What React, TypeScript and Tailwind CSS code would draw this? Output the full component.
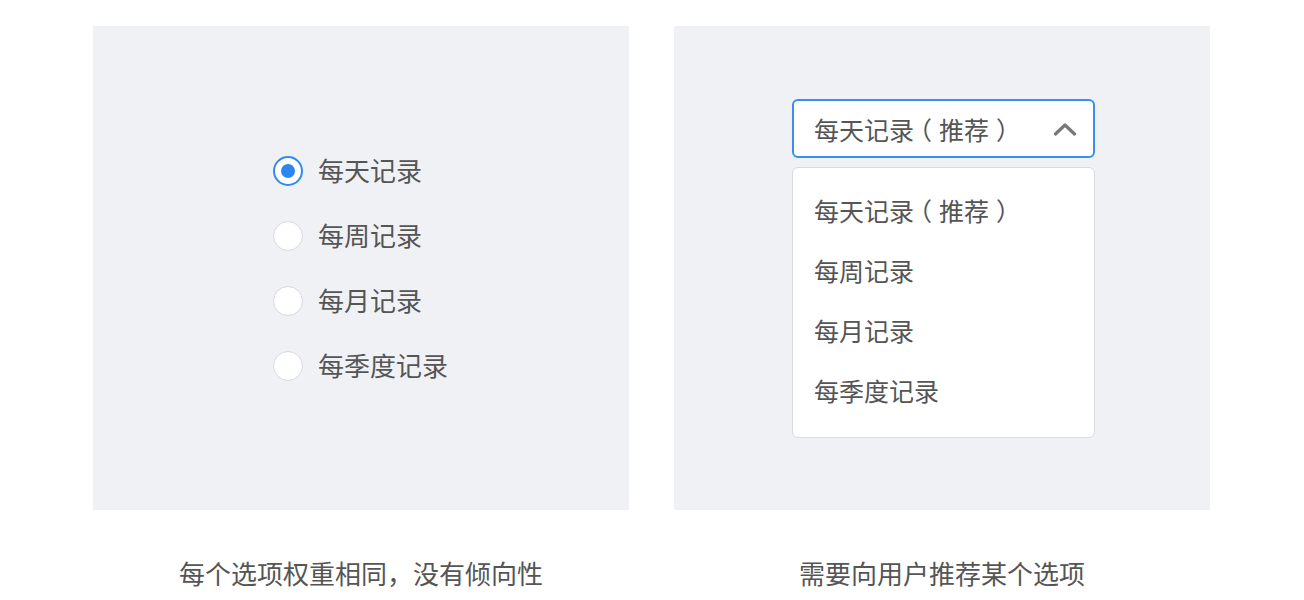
const font = { fontFamily: '"Noto Sans CJK SC", "Noto Sans", sans-serif' };

const radioOptions = ['每天记录', '每周记录', '每月记录', '每季度记录'];
const selectOptions = ['每天记录', '每周记录', '每月记录', '每季度记录'];

// full-width parens sit centred in their cell in the mock
function Recommended() {
  return (
    <>
      <span className="relative -left-[7px]">（</span>
      推荐
      <span className="relative left-[7px]">）</span>
    </>
  );
}

function Radio({ checked }: { checked: boolean }) {
  return (
    <span
      className={`flex h-[30px] w-[30px] shrink-0 items-center justify-center rounded-full bg-white ${
        checked ? 'border-2 border-[#2f8bf0]' : 'border border-[#d6d8de]'
      }`}
    >
      {checked && <span className="h-[14px] w-[14px] rounded-full bg-[#2b87f0]" />}
    </span>
  );
}

export default function App() {
  return (
    <div className="h-[600px] w-[1304px] bg-white [text-spacing-trim:space-all]" style={font}>
      <div className="flex gap-[45px] pl-[93px] pt-[26px]">
        <div className="flex w-[536px] flex-col">
          <div className="flex h-[484px] flex-col bg-[#f0f1f5] pl-[180px] pt-[130px]">
            <div className="flex flex-col gap-[35px]">
              {radioOptions.map((label, i) => (
                <label key={label} className="flex h-[30px] items-center gap-[15px]">
                  <Radio checked={i === 0} />
                  <span className="-mt-[3px] text-[26px] leading-[30px] text-[#555]">{label}</span>
                </label>
              ))}
            </div>
          </div>
          <p className="mt-[45px] text-center text-[26px] leading-[36px] text-[#555]">
            每个选项权重相同，没有倾向性
          </p>
        </div>

        <div className="flex w-[536px] flex-col">
          <div className="flex h-[484px] flex-col bg-[#f0f1f5] pl-[118px] pt-[73px]">
            <div className="flex h-[59px] w-[303px] items-center justify-between rounded-[6px] border-2 border-[#3a8ef0] bg-white pl-[20px] pr-[16px]">
              <span className="text-[25px] leading-[30px] text-[#555]">
                每天记录<Recommended />
              </span>
              <svg width="24" height="14" viewBox="0 0 24 14" fill="none">
                <path d="M2.5 12 L12 3 L21.5 12" stroke="#777" strokeWidth="3.2" strokeLinecap="round" strokeLinejoin="round" />
              </svg>
            </div>
            <div className="mt-[9px] flex h-[271px] w-[303px] flex-col rounded-[6px] border border-[#d9dbe0] bg-white pl-[21px] pt-[13px]">
              {selectOptions.map((label, i) => (
                <div key={label} className="flex h-[60px] items-center text-[25px] text-[#555]">
                  <span>
                    {label}
                    {i === 0 && <Recommended />}
                  </span>
                </div>
              ))}
            </div>
          </div>
          <p className="mt-[45px] text-center text-[26px] leading-[36px] text-[#555]">
            需要向用户推荐某个选项
          </p>
        </div>
      </div>
    </div>
  );
}
